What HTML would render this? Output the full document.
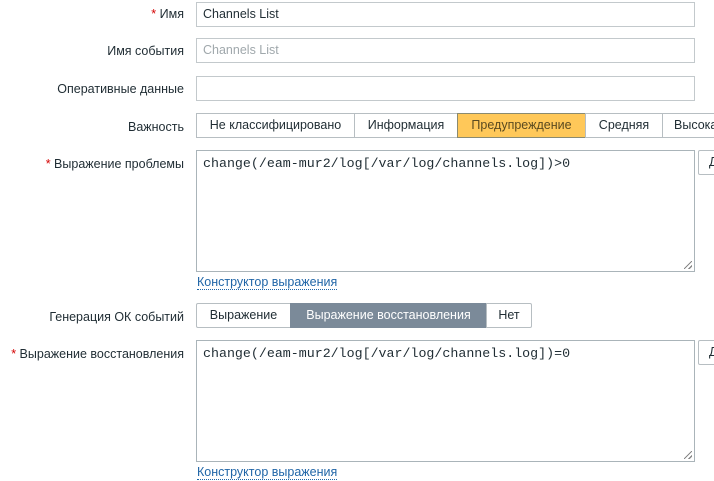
<!DOCTYPE html>
<html><head><meta charset="utf-8"><style>
body{margin:0;width:714px;height:481px;overflow:hidden;background:#fff;font-family:"Liberation Sans",sans-serif;font-size:12.5px;color:#1f2c33;position:relative}
.lbl{position:absolute;right:530px;text-align:right;white-space:nowrap}
.req{color:#d40000}
.inp{position:absolute;left:196px;border:1px solid #c3c9cc;box-sizing:border-box;width:499px;height:25px;padding:0 6px;line-height:23px}
.ta{position:absolute;left:196px;width:499px;height:122px;border:1px solid #aab4b9;box-sizing:border-box;padding:5px 6px;font-family:"Liberation Mono",monospace;font-size:13.3px;color:#1f2c33}
.seg{position:absolute;height:25px;box-sizing:border-box;border:1px solid #b7bec2;line-height:23px;text-align:center;background:#fff;white-space:nowrap}
.link{position:absolute;left:197px;color:#1f65a7;border-bottom:1px dotted #1f65a7;line-height:13px}
.btn{position:absolute;left:698px;width:30px;height:25px;border:1px solid #b7bec2;border-radius:2px;box-sizing:border-box;padding-left:10px;line-height:23px}
.grip{position:absolute;width:8px;height:8px;background:linear-gradient(135deg,transparent 45%,#888 45%,#888 55%,transparent 55%,transparent 75%,#888 75%,#888 85%,transparent 85%)}
</style></head><body>
<div class="lbl" style="top:7px"><span class="req">*</span> Имя</div>
<div class="inp" style="top:2px">Channels List</div>
<div class="lbl" style="top:44px">Имя события</div>
<div class="inp" style="top:38px;color:#a0a8ac">Channels List</div>
<div class="lbl" style="top:82px">Оперативные данные</div>
<div class="inp" style="top:76px"></div>
<div class="lbl" style="top:120px">Важность</div>
<div class="seg" style="left:196px;top:113px;width:159px">Не классифицировано</div>
<div class="seg" style="left:354px;top:113px;width:104px">Информация</div>
<div class="seg" style="left:457px;top:113px;width:129px;background:#ffc859;border-color:#8a8a70;color:#5a4a20">Предупреждение</div>
<div class="seg" style="left:585px;top:113px;width:78px">Средняя</div>
<div class="seg" style="left:662px;top:113px;width:70px;text-align:left;padding-left:11px">Высокая</div>
<div class="lbl" style="top:157px"><span class="req">*</span> Выражение проблемы</div>
<div class="ta" style="top:150px">change(/eam-mur2/log[/var/log/channels.log])&gt;0</div>
<div class="grip" style="left:684px;top:261px"></div>
<div class="btn" style="top:150px">Д</div>
<div class="link" style="top:276px">Конструктор выражения</div>
<div class="lbl" style="top:310px">Генерация ОК событий</div>
<div class="seg" style="left:196px;top:303px;width:95px;border-radius:2px 0 0 2px">Выражение</div>
<div class="seg" style="left:290px;top:303px;width:197px;background:#7b8a99;border-color:#7b8a99;color:#fff">Выражение восстановления</div>
<div class="seg" style="left:486px;top:303px;width:46px;border-radius:0 2px 2px 0">Нет</div>
<div class="lbl" style="top:347px"><span class="req">*</span> Выражение восстановления</div>
<div class="ta" style="top:340px">change(/eam-mur2/log[/var/log/channels.log])=0</div>
<div class="grip" style="left:684px;top:451px"></div>
<div class="btn" style="top:340px">Д</div>
<div class="link" style="top:466px">Конструктор выражения</div>
</body></html>
